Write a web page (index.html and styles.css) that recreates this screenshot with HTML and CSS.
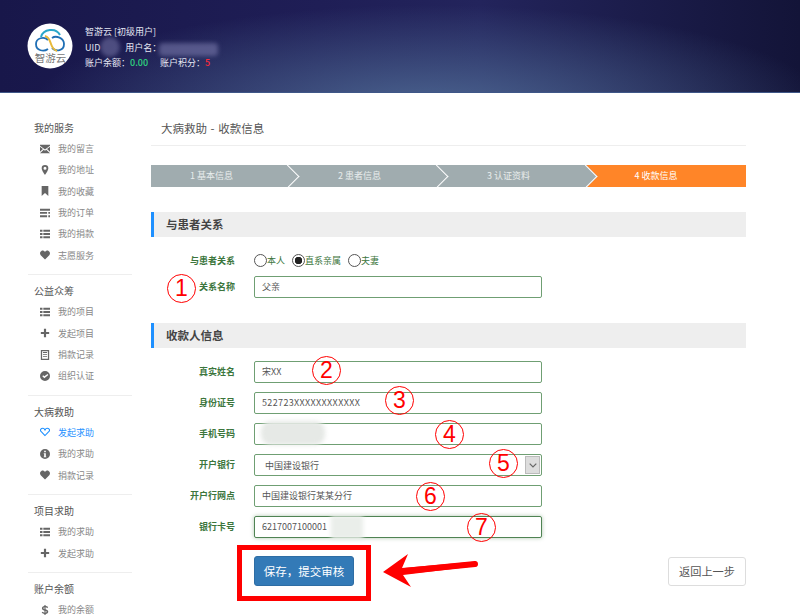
FILE: index.html
```html
<!DOCTYPE html>
<html>
<head>
    <meta charset="UTF-8">
    <title>大病救助 - 收款信息</title>
    <link rel="stylesheet" href="styles.css">
</head>
<body>
    <svg class="icon-defs" width="0" height="0">
        <symbol id="i-mail" viewBox="0 0 12 10"><path d="M0 1V0h12v1L6 5.500zM0 2.400 3.600 5 0 8.400zM12 2.400 8.400 5 12 8.400zM4.500 5.800 6 7l1.500-1.200L12 10H0z"/></symbol>
        <symbol id="i-pin" viewBox="0 0 12 12"><path fill-rule="evenodd" d="M6 0a4 4 0 0 1 4 4c0 3-4 8-4 8S2 7 2 4a4 4 0 0 1 4-4zm0 2.200a1.800 1.800 0 1 0 0 3.600 1.800 1.800 0 0 0 0-3.600z"/></symbol>
        <symbol id="i-mark" viewBox="0 0 12 12"><path d="M2 0h8v12L6 8.500 2 12z"/></symbol>
        <symbol id="i-order" viewBox="0 0 12 10"><path d="M0 0h12v2.200H0zM0 3.800h8.500V6H0zM0 7.800h8.500V10H0zM10 3.800h2V6h-2zM10 7.800h2V10h-2z"/></symbol>
        <symbol id="i-list" viewBox="0 0 12 10"><path d="M0 0h3v2.400H0zM4 0h8v2.400H4zM0 3.800h3v2.400H0zM4 3.800h8v2.400H4zM0 7.600h3V10H0zM4 7.600h8V10H4z"/></symbol>
        <symbol id="i-heart" viewBox="0 0 12 11"><path d="M6 11 .9 5.800C-.6 4.200-.1 1.500 1.700.6 3.300-.2 5 .4 6 2c1-1.600 2.700-2.200 4.300-1.400 1.800.9 2.300 3.600.8 5.200z"/></symbol>
        <symbol id="i-heart-o" viewBox="0 0 12 11"><path fill="none" stroke="currentColor" stroke-width="1.300" d="M6 9.800 1.500 5.200C.4 4-.1 2.300 2 1.300 3.500.6 5.200 1.300 6 3c.8-1.700 2.500-2.400 4-1.700 2.100 1 1.600 2.700.5 3.900z"/></symbol>
        <symbol id="i-plus" viewBox="0 0 12 12"><path d="M4.700 1h2.600v3.700H11v2.600H7.300V11H4.700V7.300H1V4.700h3.700z"/></symbol>
        <symbol id="i-book" viewBox="0 0 12 12"><path fill-rule="evenodd" d="M1 0h10v12H1zm1.500 1.500v9h7v-9zm1 1h5v1h-5zm0 2.500h5v1h-5zm0 2.500h5v1h-5z"/></symbol>
        <symbol id="i-check" viewBox="0 0 12 12"><path fill-rule="evenodd" d="M6 0a6 6 0 1 1 0 12A6 6 0 0 1 6 0zm3 3.500L5.200 6.300 3.800 5 2.800 6.200l2.400 2.400L10 4.700z"/></symbol>
        <symbol id="i-info" viewBox="0 0 12 12"><path fill-rule="evenodd" d="M6 0a6 6 0 1 1 0 12A6 6 0 0 1 6 0zM5 2v1.800h2V2zM4.500 5v1H5v3h-.5v1h3V9H7V5z"/></symbol>
        <symbol id="i-dollar" viewBox="0 0 12 12"><path fill-rule="evenodd" d="M5.300 0h1.400v1.300c1.300.1 2.300.6 3 1.200l-.9 1.300c-.7-.5-1.400-.9-2.100-1v2.300c1.900.6 3.200 1.200 3.200 3 0 1.500-1.200 2.500-3.200 2.700V12H5.300v-1.200C4 10.700 3 10.200 2 9.400l1-1.300c.7.600 1.500 1 2.300 1.100V6.900C3.500 6.300 2.300 5.700 2.300 4c0-1.500 1.200-2.500 3-2.700zm0 2.800c-.8.100-1.200.5-1.200 1 0 .6.400.9 1.200 1.200zm1.400 4.400v2c.8-.1 1.300-.5 1.300-1 0-.6-.5-.8-1.300-1z"/></symbol>
    </svg>

    <div class="top">
        <svg class="logo" viewBox="0 0 46 46">
            <circle cx="23" cy="23" r="22.500" fill="#fff"/>
            <path d="M14 14C16 6 29 4 33 12" fill="none" stroke="#2aa7c9" stroke-width="2"/>
            <path d="M21 26C17 29 9 28 9 21 9 15 17 13 21 17" fill="none" stroke="#1f6fb5" stroke-width="1.800"/>
            <path d="M25 15C29 12 37 15 37 21 37 28 29 29 25 25" fill="none" stroke="#1f6fb5" stroke-width="1.800"/>
            <path d="M18 13C22 14 23 18 24 21 25 24 27 27 30 28" fill="none" stroke="#e8b93a" stroke-width="2"/>
            <text x="23.500" y="39" class="logo-text">智游云</text>
        </svg>
        <div class="user">
            <div>智游云 [初级用户]</div>
            <div>UID<span class="user-gap"></span>用户名：</div>
            <div>账户余额：<b class="money">0.00</b><span class="user-gap2"></span>账户积分：<b class="score">5</b></div>
        </div>
    </div>

    <div class="page">
        <div class="side">
            <div class="group">
                <div class="group-title">我的服务</div>
                <a class="item"><svg><use href="#i-mail"/></svg>我的留言</a>
                <a class="item"><svg><use href="#i-pin"/></svg>我的地址</a>
                <a class="item"><svg><use href="#i-mark"/></svg>我的收藏</a>
                <a class="item"><svg><use href="#i-order"/></svg>我的订单</a>
                <a class="item"><svg><use href="#i-list"/></svg>我的捐款</a>
                <a class="item"><svg><use href="#i-heart"/></svg>志愿服务</a>
            </div>
            <div class="group">
                <div class="group-title">公益众筹</div>
                <a class="item"><svg><use href="#i-list"/></svg>我的项目</a>
                <a class="item"><svg><use href="#i-plus"/></svg>发起项目</a>
                <a class="item"><svg><use href="#i-book"/></svg>捐款记录</a>
                <a class="item"><svg><use href="#i-check"/></svg>组织认证</a>
            </div>
            <div class="group">
                <div class="group-title">大病救助</div>
                <a class="item active"><svg><use href="#i-heart-o"/></svg>发起求助</a>
                <a class="item"><svg><use href="#i-info"/></svg>我的求助</a>
                <a class="item"><svg><use href="#i-heart"/></svg>捐款记录</a>
            </div>
            <div class="group">
                <div class="group-title">项目求助</div>
                <a class="item"><svg><use href="#i-list"/></svg>我的求助</a>
                <a class="item"><svg><use href="#i-plus"/></svg>发起求助</a>
            </div>
            <div class="group">
                <div class="group-title">账户余额</div>
                <a class="item"><svg><use href="#i-dollar"/></svg>我的余额</a>
            </div>
        </div>

        <div class="main">
            <div class="main-title">大病救助 - 收款信息</div>

            <div class="steps">
                <div class="step">1 基本信息</div>
                <div class="step">2 患者信息</div>
                <div class="step">3 认证资料</div>
                <div class="step current">4 收款信息</div>
            </div>

            <div class="section">与患者关系</div>
            <div class="row">
                <label class="row-label">与患者关系</label>
                <div class="radios">
                    <label class="radio"><input type="radio" name="rel">本人</label>
                    <label class="radio"><input type="radio" name="rel" checked>直系亲属</label>
                    <label class="radio"><input type="radio" name="rel">夫妻</label>
                </div>
            </div>
            <div class="row">
                <label class="row-label">关系名称</label>
                <input class="field" type="text" value="父亲">
            </div>

            <div class="section second">收款人信息</div>
            <div class="row">
                <label class="row-label">真实姓名</label>
                <input class="field" type="text" value="宋XX">
            </div>
            <div class="row">
                <label class="row-label">身份证号</label>
                <input class="field wide" type="text" value="522723XXXXXXXXXXXX">
            </div>
            <div class="row">
                <label class="row-label">手机号码</label>
                <input class="field" type="text">
            </div>
            <div class="row">
                <label class="row-label">开户银行</label>
                <div class="field select">
                    <span class="select-value">中国建设银行</span>
                    <span class="select-btn"><svg width="8" height="5" viewBox="0 0 8 5"><path d="M.7.7 4 4 7.300.7" fill="none" stroke="#666" stroke-width="1.200"/></svg></span>
                </div>
            </div>
            <div class="row">
                <label class="row-label">开户行网点</label>
                <input class="field" type="text" value="中国建设银行某某分行">
            </div>
            <div class="row">
                <label class="row-label">银行卡号</label>
                <input class="field glow" type="text" value="6217007100001">
            </div>

            <div class="actions">
                <button class="btn-save" type="button">保存，提交审核</button>
                <button class="btn-back" type="button">返回上一步</button>
            </div>
        </div>
    </div>

    <!-- hand-drawn marks on top of the screenshot -->
    <div class="smudge s-uid"></div>
    <div class="smudge s-name"></div>
    <div class="smudge s-phone"></div>
    <div class="smudge s-card"></div>

    <div class="mark m1">1</div>
    <div class="mark m2">2</div>
    <div class="mark m3">3</div>
    <div class="mark m4">4</div>
    <div class="mark m5">5</div>
    <div class="mark m6">6</div>
    <div class="mark m7">7</div>

    <div class="red-box"></div>
    <svg class="arrow" width="110" height="40" viewBox="0 0 110 40">
        <path d="M2 20 27 2 21 16 95 9.500 96 14 22 23 30 35z" fill="#f00"/>
        <path d="M24 19 94 12" stroke="#f00" stroke-width="6" stroke-linecap="round"/>
    </svg>
</body>
</html>
```
FILE: styles.css
```css
* {
    box-sizing: border-box;
}
html, body {
    margin: 0;
    height: 615px;
    overflow: hidden;
}
body {
    position: relative;
    background-color: #fff;
    color: #555;
    font-family: "Noto Sans CJK SC", "Liberation Sans", sans-serif;
    font-size: 9px;
}
.icon-defs {
    position: absolute;
}

/* header */
.top {
    height: 93px;
    padding: 23px 0 0 27px;
    display: flex;
    gap: 12px;
    color: #e4e6f2;
    border-bottom: 1px solid #3f5788;
    background:
        radial-gradient(ellipse 400px 105px at 430px 110px, rgba(80,108,150,.9), rgba(80,108,150,0)),
        linear-gradient(90deg, #18174a, #1f1e56 40%, #23245c 60%, #131438);
}
.logo {
    width: 46px;
    height: 46px;
}
.logo-text {
    font-size: 10.500px;
    fill: #777;
    text-anchor: middle;
}
.user {
    padding-top: 1px;
    line-height: 15.500px;
    font-size: 9px;
}
.user-gap {
    display: inline-block;
    width: 25px;
}
.user-gap2 {
    display: inline-block;
    width: 12px;
}
.money {
    color: #2ed67f;
    font-weight: 500;
}
.score {
    color: #ff2a3a;
    font-weight: 500;
}

/* sidebar */
.page {
    display: flex;
}
.side {
    width: 151px;
    padding: 25px 19px 0 28px;
    flex-shrink: 0;
}
.group {
    border-bottom: 1px solid #eee;
    padding-bottom: 8px;
    margin-bottom: 6.250px;
}
.group:last-child {
    border-bottom: 0;
}
.group-title {
    height: 20px;
    line-height: 20px;
    padding-left: 6px;
    font-size: 10px;
    color: #555;
}
.item {
    display: flex;
    align-items: center;
    height: 21.33px;
    padding-left: 12px;
    line-height: 11px;
    color: #888;
}
.item svg {
    width: 10px;
    height: 10px;
    margin-right: 8px;
    fill: #666;
}
.item.active {
    color: #1e90ff;
}
.item.active svg {
    fill: none;
}

/* main column */
.main {
    width: 595px;
}
.main-title {
    height: 53px;
    padding: 24px 0 0 10px;
    line-height: 22px;
    font-size: 11.500px;
    word-spacing: 1px;
    color: #555;
    border-bottom: 1px solid #eee;
}
.steps {
    display: flex;
    margin: 19px 0 25px;
    overflow: hidden;
}
.step {
    position: relative;
    height: 22px;
    line-height: 22px;
    text-align: center;
    color: #e8ecec;
    background-color: #a0acaf;
    width: 149px;
    padding-right: 6px;
}
.step:first-child {
    width: 137px;
    padding-right: 16px;
}
.step::after {
    content: "";
    position: absolute;
    top: 3px;
    right: -8px;
    width: 16px;
    height: 16px;
    transform: rotate(45deg);
    background-color: #a0acaf;
    border-top: 1.500px solid #fff;
    border-right: 1.500px solid #fff;
    z-index: 1;
}
.step.current {
    width: 160px;
    padding-right: 20px;
    color: #fff;
    background-color: #ff8528;
}
.step.current::after {
    display: none;
}
.section {
    height: 25px;
    line-height: 25px;
    padding-left: 12px;
    margin-bottom: 13px;
    background-color: #eee;
    border-left: 3px solid #1e90ff;
    font-size: 11.500px;
    font-weight: bold;
    color: #444;
}
.section.second {
    margin-top: 25px;
}

/* form rows */
.row {
    display: flex;
    align-items: center;
    height: 22px;
    margin-bottom: 9px;
}
.section + .row {
    margin-bottom: 4px;
}
.section.second + .row {
    margin-bottom: 9px;
}
.row-label {
    width: 84px;
    margin-right: 19px;
    padding-bottom: 2px;
    text-align: right;
    font-weight: bold;
    color: #3c763d;
}
.field {
    width: 288px;
    height: 22px;
    padding: 0 7px 1px;
    border: 1px solid #6f9f73;
    border-radius: 2px;
    background-color: #fff;
    font-family: inherit;
    font-size: 9px;
    color: #555;
    outline: 0;
}
.field.wide {
    letter-spacing: .35px;
}
.field.glow {
    border-color: #4f8353;
    box-shadow: 0 0 4px rgba(60,118,61,.4);
}
.radios {
    display: flex;
    gap: 7px;
    padding-bottom: 1px;
    color: #3c763d;
}
.radio {
    display: flex;
    align-items: center;
}
.radio input {
    appearance: none;
    width: 13px;
    height: 13px;
    margin: 0;
    border: 1px solid #555;
    border-radius: 50%;
    background-color: #fff;
}
.radio input:checked {
    background: radial-gradient(circle, #222 0 3.500px, #fff 4px);
}
.select {
    display: flex;
    align-items: center;
    justify-content: space-between;
    padding: 1px 1px 1px 10px;
}
.select-btn {
    display: flex;
    align-items: center;
    justify-content: center;
    width: 15px;
    height: 18px;
    background-color: #ddd;
    border: 1px solid #bbb;
}

/* buttons */
.actions {
    display: flex;
    align-items: center;
    justify-content: space-between;
    margin-top: 18px;
    padding-left: 103px;
}
.btn-save {
    width: 100px;
    height: 30px;
    border: 1px solid #2e6da4;
    border-radius: 3px;
    background-color: #337ab7;
    color: #fff;
    font-family: inherit;
    font-size: 11.500px;
}
.btn-back {
    width: 78px;
    height: 29px;
    border: 1px solid #ddd;
    border-radius: 3px;
    background-color: #fff;
    color: #555;
    font-family: inherit;
    font-size: 11.200px;
}

/* marks drawn over the page */
.mark {
    position: absolute;
    width: 29px;
    height: 29px;
    border: 1px solid #f00;
    border-radius: 50%;
    color: #f00;
    font-family: "Liberation Sans", sans-serif;
    font-size: 23px;
    line-height: 27px;
    text-align: center;
}
.m1 { left: 167px; top: 274px; }
.m2 { left: 312px; top: 356px; }
.m3 { left: 385px; top: 386px; }
.m4 { left: 435px; top: 420px; }
.m5 { left: 489px; top: 449px; }
.m6 { left: 416px; top: 482px; }
.m7 { left: 467px; top: 513px; }

.smudge {
    position: absolute;
    filter: blur(2px);
}
.s-uid {
    left: 100px;
    top: 37px;
    width: 20px;
    height: 20px;
    border-radius: 50%;
    background-color: rgba(120,120,170,.55);
}
.s-name {
    left: 159px;
    top: 43px;
    width: 59px;
    height: 13px;
    border-radius: 4px;
    background-color: rgba(120,120,170,.6);
}
.s-phone {
    left: 261px;
    top: 421px;
    width: 64px;
    height: 24px;
    border-radius: 10px;
    background-color: #e6e9e6;
}
.s-card {
    left: 331px;
    top: 516px;
    width: 32px;
    height: 23px;
    background-color: #eaeeea;
}
.red-box {
    position: absolute;
    left: 237px;
    top: 545px;
    width: 134px;
    height: 56px;
    border: 5px solid #f00;
}
.arrow {
    position: absolute;
    left: 381px;
    top: 552px;
}
```
